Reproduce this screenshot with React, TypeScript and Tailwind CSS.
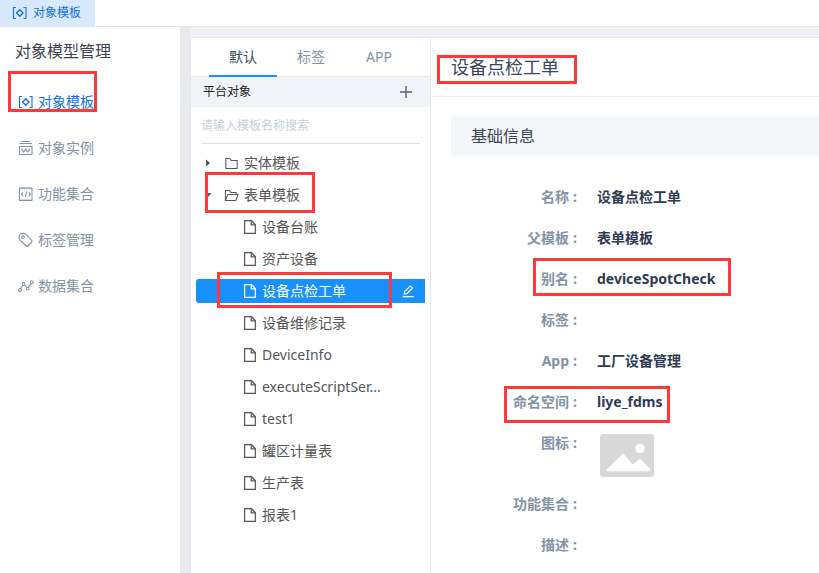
import type { ReactNode } from "react";

const font = "font-['Noto_Sans','Noto_Sans_CJK_SC',sans-serif]";

function Mark({ className }: { className: string }) {
  return (
    <span
      aria-hidden="true"
      className={`pointer-events-none absolute z-10 border-[3px] border-[#ff3838] ${className}`}
    />
  );
}

function Svg({ size, className = "", children }: { size: string; className?: string; children: ReactNode }) {
  return (
    <svg
      viewBox="0 0 16 16"
      aria-hidden="true"
      fill="none"
      stroke="currentColor"
      strokeWidth="1.1"
      className={`shrink-0 ${size} ${className}`}
    >
      {children}
    </svg>
  );
}

function TemplateIcon() {
  return (
    <Svg size="size-4">
      <path d="M4 2.5H1.500v11H4M11.500 2.500H14v11h-2.500" />
      <path d="M7.800 4.800L11 8l-3.200 3.200L4.600 8z" strokeWidth="1.4" strokeLinejoin="round" />
    </Svg>
  );
}

function InstanceIcon() {
  return (
    <Svg size="size-4">
      <path d="M3.500 1.500h8.500M1.500 3.500h12.500M1.500 6.500h12.500v8h-12.500z" />
      <path d="M3.500 8.600l2 3.400 2.300-3 2 3 2.200-3.400" strokeWidth="1.2" />
    </Svg>
  );
}

function CodeIcon() {
  return (
    <Svg size="size-4">
      <path d="M1.500 2h12.500v12.500h-12.500z" strokeWidth="1" />
      <path d="M1 2.500h13.500M1 14h13.500" strokeWidth="1.4" opacity=".5" />
      <path d="M5 6.300L3.300 8.200 5 10.100M10.700 6.300l1.700 1.900-1.700 1.900M8.700 5.500l-1.500 5.400" />
    </Svg>
  );
}

function TagIcon() {
  return (
    <Svg size="size-4">
      <path d="M1.200 4.400 2.200 2.100 6 1.300q.8 0 1.400.6l6.300 6.400q.7.900 0 1.700l-3.800 4q-.9.800-1.700 0L1.800 7.600q-.6-.6-.7-1.400z" strokeLinejoin="round" />
      <circle cx="5" cy="5.200" r="1.300" />
    </Svg>
  );
}

function DataIcon() {
  return (
    <Svg size="size-4">
      <circle cx="2" cy="12" r="1.400" />
      <circle cx="5.600" cy="6" r="1.400" />
      <circle cx="9.600" cy="10.600" r="1.400" />
      <circle cx="13.700" cy="4.200" r="1.400" />
      <path d="M2.700 10.700l2.200-3.500M6.500 7.100l2.200 2.400M10.400 9.400l2.600-4" />
    </Svg>
  );
}

function FolderIcon({ open = false }: { open?: boolean }) {
  return (
    <Svg size="size-[15px]">
      {open ? (
        <path d="M1.500 13.300V2.700h4.200l1.600 2h5.600v2.200M1.500 13.300L4 6.900h11l-2.400 6.400z" />
      ) : (
        <path d="M2 2.700h4l1.600 2h6.400v8.600H2z" />
      )}
    </Svg>
  );
}

function FileIcon() {
  return (
    <svg
      viewBox="0 0 12 14"
      aria-hidden="true"
      fill="none"
      stroke="currentColor"
      strokeWidth="1.2"
      className="h-3.5 w-3 shrink-0"
    >
      <path d="M.6.6h6.900l3.800 4v8.800H.6z" />
      <path d="M7.200.8v4h4" />
    </svg>
  );
}

const menu = [
  { label: "对象模板", icon: <TemplateIcon /> },
  { label: "对象实例", icon: <InstanceIcon /> },
  { label: "功能集合", icon: <CodeIcon /> },
  { label: "标签管理", icon: <TagIcon /> },
  { label: "数据集合", icon: <DataIcon /> },
];

const files = [
  "设备台账",
  "资产设备",
  "设备点检工单",
  "设备维修记录",
  "DeviceInfo",
  "executeScriptSer...",
  "test1",
  "罐区计量表",
  "生产表",
  "报表1",
];

const fields = [
  { label: "名称", value: "设备点检工单" },
  { label: "父模板", value: "表单模板" },
  { label: "别名", value: "deviceSpotCheck", mark: "left-[102px] top-0 h-[38px] w-[198px]" },
  { label: "标签", value: "" },
  { label: "App", value: "工厂设备管理" },
  { label: "命名空间", value: "liye_fdms", mark: "left-[73px] top-[5px] h-[37px] w-[166px]" },
  { label: "图标", value: "", picture: true },
  { label: "功能集合", value: "" },
  { label: "描述", value: "" },
];

function Sidebar() {
  return (
    <aside className="w-[180px] shrink-0 bg-white">
      <h1 className="mb-1 pl-[15px] text-base leading-[48px] text-[#3c4353]">对象模型管理</h1>
      <nav>
        {menu.map((item, i) => (
          <a
            key={item.label}
            href="#"
            className={`relative flex h-[46px] items-center gap-1 pl-[18px] text-sm ${
              i === 0 ? "text-[#1272e6]" : "text-[#8492a6]"
            }`}
          >
            {item.icon}
            {item.label}
            {i === 0 && <Mark className="-top-2 left-2 h-[41px] w-[89px]" />}
          </a>
        ))}
      </nav>
    </aside>
  );
}

function TreePanel() {
  return (
    <section className="w-[240px] shrink-0 border-r border-[#e3e6eb] bg-white">
      <div role="tablist" className="flex h-[39px] border-b border-[#e4e7ec] pl-[18px] text-sm">
        {["默认", "标签", "APP"].map((t, i) => (
          <button
            key={t}
            role="tab"
            aria-selected={i === 0}
            className={`-mb-px h-[39px] w-[68px] border-b-2 ${
              i === 0 ? "border-[#1890ff] text-[#3c4a60]" : "border-transparent text-[#8492a6]"
            }`}
          >
            {t}
          </button>
        ))}
      </div>
      <div className="flex h-[30px] items-center justify-between bg-[#f0f4f8] pr-4 pl-3 text-xs text-[#222]">
        <h2>平台对象</h2>
        <button aria-label="新增" className="text-[#5a6270]">
          <Svg size="size-4">
            <path d="M8 2v12M2 8h12" strokeWidth="1.4" />
          </Svg>
        </button>
      </div>
      <div className="mb-[3px] px-[10px]">
        <input
          type="search"
          aria-label="搜索模板"
          placeholder="请输入模板名称搜索"
          className="block h-[37px] w-full border-b border-[#dcdee2] text-xs outline-none placeholder:text-[#c5d0de]"
        />
      </div>
      <ul className="px-[5px] text-sm text-[#555]">
        <li className="py-1">
          <button className="flex h-6 items-center">
            <span className="flex w-[28px] pl-[10px]">
              <svg viewBox="0 0 4 8" aria-hidden="true" className="h-2 w-1 fill-[#555]">
                <path d="M0 .5L4 4 0 7.5z" />
              </svg>
            </span>
            <FolderIcon />
            <span className="ml-[5px]">实体模板</span>
          </button>
        </li>
        <li className="relative pt-1">
          <Mark className="-top-[7px] left-[9px] h-[41px] w-[110px]" />
          <button className="flex h-6 items-center">
            <span className="flex w-[28px] pl-2">
              <svg viewBox="0 0 8 4" aria-hidden="true" className="h-1 w-2 fill-[#555]">
                <path d="M.5 0h7L4 4z" />
              </svg>
            </span>
            <FolderIcon open />
            <span className="ml-[5px]">表单模板</span>
          </button>
          <ul className="pt-1">
            {files.map((f) => {
              const on = f === "设备点检工单";
              return (
                <li key={f} className="relative py-1">
                  {on && <Mark className="-top-[3px] left-[21px] h-9 w-[175px]" />}
                  <div
                    className={`flex h-6 items-center justify-between rounded-l-[3px] pr-[10px] pl-12 ${
                      on ? "bg-[#1890ff] text-white" : ""
                    }`}
                  >
                    <button className="flex items-center gap-[6px]">
                      <FileIcon />
                      {f}
                    </button>
                    {on && (
                      <button aria-label="编辑">
                        <Svg size="size-[14px]">
                          <path d="M3.600 11.600l.6-3L10.600 2.200l2.600 2.400-6.400 6.400zM2 14.400h12.500" strokeWidth="1.3" />
                        </Svg>
                      </button>
                    )}
                  </div>
                </li>
              );
            })}
          </ul>
        </li>
      </ul>
    </section>
  );
}

function Detail() {
  return (
    <main className="min-w-0 flex-1 bg-white">
      <header className="border-b border-[#eef0f8] pl-5">
        <h2 className="relative text-lg leading-[58px] text-[#3a455a]">
          设备点检工单
          <Mark className="top-[17px] -left-[14px] h-[29px] w-[140px]" />
        </h2>
      </header>
      <div className="pt-[19px] pl-5">
        <h3 className="mb-5 rounded-l bg-[#f3f7fa] pl-5 text-base leading-10 text-[#3a455a]">基础信息</h3>
        <dl className="-ml-5 text-sm font-bold">
          {fields.map((f) => (
            <div key={f.label} className="relative flex">
              <dt className="w-[146px] shrink-0 text-right leading-[41px] text-[#8492a6]">
                {f.label}
                <span className="ml-1">:</span>
              </dt>
              <dd className="ml-5 leading-[41px] text-[#2f3b50]">
                {f.picture ? (
                  <svg viewBox="0 0 60 61" role="img" aria-label="图标" className="h-[61px] w-[60px]">
                    <rect x="3" y="12" width="54" height="43" rx="3" fill="#d8d8d8" />
                    <circle cx="43" cy="26.500" r="4.800" fill="#fff" />
                    <path
                      d="M10.500 47.500L26 32.500l9.500 11 7.500-6 9.500 9.500v1.500h-42z"
                      fill="#fff"
                      stroke="#fff"
                      strokeWidth="1.500"
                      strokeLinejoin="round"
                    />
                  </svg>
                ) : (
                  f.value
                )}
              </dd>
              {f.mark && <Mark className={f.mark} />}
            </div>
          ))}
        </dl>
      </div>
    </main>
  );
}

export default function App() {
  return (
    <div className={`flex min-h-screen flex-col bg-white ${font}`}>
      <div className="flex border-b border-[#e6e6e8]">
        <a href="#" className="flex h-[26px] w-[95px] items-center gap-[5px] bg-[#d8e9fd] pl-3 text-xs text-[#1272e6]">
          <TemplateIcon />
          对象模板
        </a>
      </div>
      <div className="flex flex-1">
        <Sidebar />
        <div className="flex min-w-0 flex-1 border-l-[10px] border-[#e9eaee] bg-[#f0f1f5] pt-[10px]">
          <div className="flex min-w-0 flex-1 border-t border-l border-[#e3e6eb]">
            <TreePanel />
            <Detail />
          </div>
        </div>
      </div>
    </div>
  );
}
